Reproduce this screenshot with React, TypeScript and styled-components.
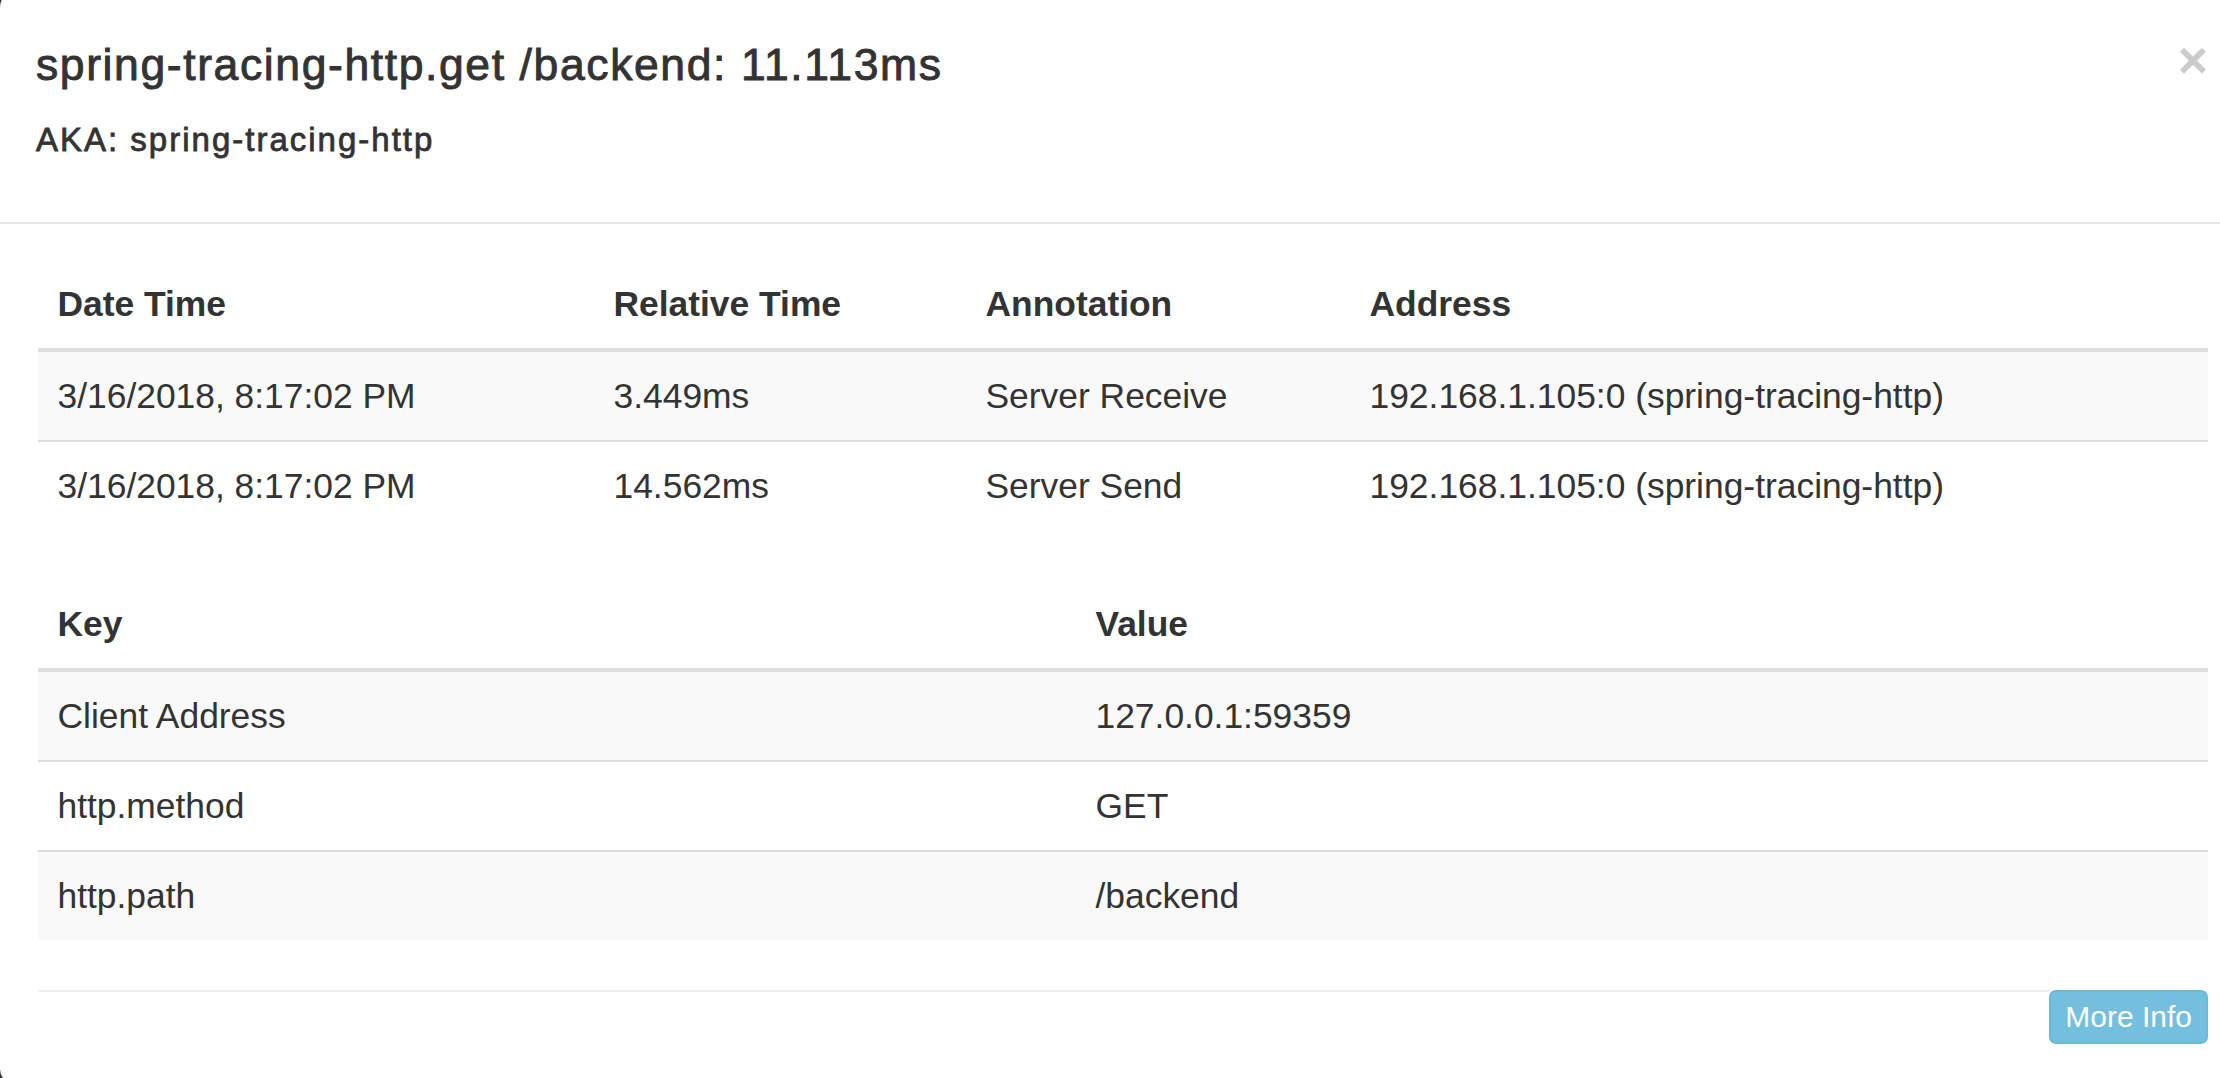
import React from "react";
import styled, { createGlobalStyle } from "styled-components";

const GlobalStyle = createGlobalStyle`
  html, body {
    margin: 0;
    padding: 0;
    overflow: hidden;
  }
  body {
    background: #333333;
    font-family: "Liberation Sans", Arial, Helvetica, sans-serif;
    color: #333333;
  }
`;

const Viewport = styled.div`
  width: 2220px;
  height: 1078px;
  overflow: hidden;
`;

const Modal = styled.div`
  width: 2246px;
  margin-top: -8px;
  background: #ffffff;
  border-radius: 15px;
`;

const Header = styled.div`
  display: flex;
  justify-content: space-between;
  align-items: flex-start;
  padding: 48px 38px 62px 36px;
  border-bottom: 2px solid #e5e5e5;
`;

const TitleBlock = styled.div`
  display: flex;
  flex-direction: column;
`;

const Title = styled.h4`
  margin: 0;
  font-size: 44.5px;
  line-height: 50px;
  font-weight: 400;
  letter-spacing: 1.6px;
  -webkit-text-stroke: 0.9px #333333;
  color: #333333;
`;

const Aka = styled.h5`
  margin: 30px 0 0;
  font-size: 33px;
  line-height: 40px;
  font-weight: 400;
  letter-spacing: 2px;
  -webkit-text-stroke: 0.8px #333333;
  color: #333333;
`;

const Close = styled.button`
  margin-top: -5px;
  padding: 0;
  border: 0;
  background: transparent;
  font-family: "Liberation Sans", Arial, sans-serif;
  font-size: 52px;
  line-height: 51px;
  font-weight: 700;
  color: #000000;
  opacity: 0.2;
  cursor: pointer;
`;

const Body = styled.div`
  padding: 36px 38px 40px;
`;

const Table = styled.table`
  width: 100%;
  table-layout: fixed;
  border-collapse: separate;
  border-spacing: 0;
  margin-bottom: 50px;
  font-size: 35.4px;
  line-height: 49px;
`;

const Col = styled.col<{ $width: number }>`
  width: ${(p) => p.$width}px;
`;

const Th = styled.th`
  text-align: left;
  font-weight: 700;
  padding: 19.5px 19px 19.5px 19.5px;
  border-bottom: 4px solid #dddddd;
  white-space: nowrap;
`;

const Tr = styled.tr`
  &:nth-of-type(odd) {
    background: #f9f9f9;
  }
  & + & > td {
    border-top: 2px solid #dddddd;
  }
`;

const Td = styled.td`
  padding: 19.5px 19px 19.5px 19.5px;
  white-space: nowrap;
  font-weight: 400;
`;

const Footer = styled.div`
  display: flex;
  align-items: flex-start;
`;

const Rule = styled.div`
  flex: 1;
  border-top: 2px solid #eeeeee;
`;

const InfoButton = styled.button`
  font-family: "Liberation Sans", Arial, sans-serif;
  font-size: 30px;
  line-height: 44px;
  padding: 3px 14px;
  border: 2px solid #69b9d8;
  border-radius: 7px;
  background: #74bfdd;
  color: #ffffff;
  cursor: pointer;
`;

const annotations = [
  {
    date: "3/16/2018, 8:17:02 PM",
    rel: "3.449ms",
    ann: "Server Receive",
    addr: "192.168.1.105:0 (spring-tracing-http)",
  },
  {
    date: "3/16/2018, 8:17:02 PM",
    rel: "14.562ms",
    ann: "Server Send",
    addr: "192.168.1.105:0 (spring-tracing-http)",
  },
];

const tags: [string, string][] = [
  ["Client Address", "127.0.0.1:59359"],
  ["http.method", "GET"],
  ["http.path", "/backend"],
];

export default function App() {
  return (
    <>
      <GlobalStyle />
      <Viewport>
        <Modal>
          <Header>
            <TitleBlock>
              <Title>spring-tracing-http.get /backend: 11.113ms</Title>
              <Aka>AKA: spring-tracing-http</Aka>
            </TitleBlock>
            <Close aria-label="Close">×</Close>
          </Header>
          <Body>
            <Table>
              <colgroup>
                <Col $width={556} />
                <Col $width={372} />
                <Col $width={384} />
                <Col $width={858} />
              </colgroup>
              <thead>
                <tr>
                  <Th>Date Time</Th>
                  <Th>Relative Time</Th>
                  <Th>Annotation</Th>
                  <Th>Address</Th>
                </tr>
              </thead>
              <tbody>
                {annotations.map((a, i) => (
                  <Tr key={i}>
                    <Td>{a.date}</Td>
                    <Td>{a.rel}</Td>
                    <Td>{a.ann}</Td>
                    <Td>{a.addr}</Td>
                  </Tr>
                ))}
              </tbody>
            </Table>
            <Table>
              <colgroup>
                <Col $width={1038} />
                <Col $width={1132} />
              </colgroup>
              <thead>
                <tr>
                  <Th>Key</Th>
                  <Th>Value</Th>
                </tr>
              </thead>
              <tbody>
                {tags.map(([k, v]) => (
                  <Tr key={k}>
                    <Td>{k}</Td>
                    <Td>{v}</Td>
                  </Tr>
                ))}
              </tbody>
            </Table>
            <Footer>
              <Rule />
              <InfoButton>More Info</InfoButton>
            </Footer>
          </Body>
        </Modal>
      </Viewport>
    </>
  );
}
